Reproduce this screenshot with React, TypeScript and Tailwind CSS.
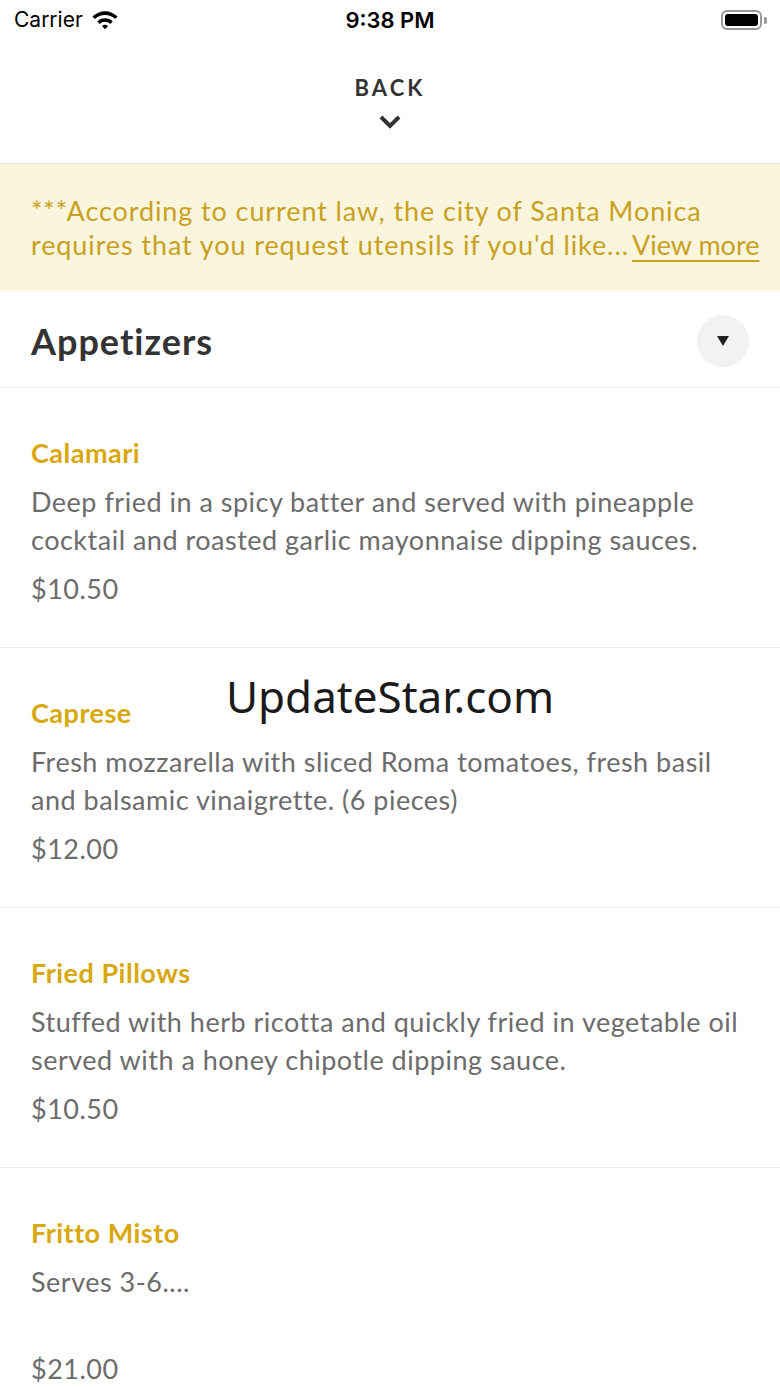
const items = [
  {
    name: 'Calamari',
    desc: 'Deep fried in a spicy batter and served with pineapple cocktail and roasted garlic mayonnaise dipping sauces.',
    price: '$10.50',
  },
  {
    name: 'Caprese',
    desc: 'Fresh mozzarella with sliced Roma tomatoes, fresh basil and balsamic vinaigrette. (6 pieces)',
    price: '$12.00',
  },
  {
    name: 'Fried Pillows',
    desc: 'Stuffed with herb ricotta and quickly fried in vegetable oil served with a honey chipotle dipping sauce.',
    price: '$10.50',
  },
  {
    name: 'Fritto Misto',
    desc: 'Serves 3-6....\n\u00a0',
    price: '$21.00',
  },
]

function StatusBar() {
  return (
    <div className="relative flex h-[40px] items-center justify-between pl-[14px] pr-[13px] font-['Inter',sans-serif] text-[21px] text-black">
      <div className="flex items-center gap-[8px]">
        <span>Carrier</span>
        <svg width="28" height="21" viewBox="0 0 26 20" className="mb-[2px]">
          <path d="M1 7.2a17 17 0 0 1 24 0l-2.4 2.4a13.6 13.6 0 0 0-19.2 0z" fill="#000" />
          <path d="M5.6 11.8a10.5 10.5 0 0 1 14.8 0l-2.4 2.4a7.1 7.1 0 0 0-10 0z" fill="#000" />
          <path d="M10.1 16.3a4.1 4.1 0 0 1 5.8 0L13 19.2z" fill="#000" />
        </svg>
      </div>
      <span className="absolute left-1/2 -translate-x-1/2 text-[22px] font-semibold">9:38 PM</span>
      <div className="flex items-center gap-[2px]">
        <div className="flex h-[20px] w-[41px] items-center rounded-[6px] border-2 border-[#9a9a9a] p-[2px]">
          <div className="h-full w-full rounded-[3px] bg-black" />
        </div>
        <div className="h-[7px] w-[3px] rounded-r-[2px] bg-[#9a9a9a]" />
      </div>
    </div>
  )
}

export default function App() {
  return (
    <div className="relative min-h-[1387px] w-[780px] overflow-hidden bg-white font-['Lato',sans-serif]">
      <StatusBar />

      <div className="flex h-[124px] flex-col items-center border-b border-[#e8e8e8] pt-[33px]">
        <span className="text-[22px] font-bold leading-[30px] tracking-[0.14em] text-[#333]">BACK</span>
        <svg width="24" height="16" viewBox="0 0 24 16" className="mt-[11px]">
          <path d="M3 3l9 9 9-9" fill="none" stroke="#333" strokeWidth="4" />
        </svg>
      </div>

      <div className="bg-[#faf6de] pl-[31px] pr-[10px] pt-[30px] pb-[29px] text-[27px] leading-[34px] tracking-[0.9px] text-[#c9a020]">
        ***According to current law, the city of Santa Monica requires that you request utensils if you'd like...
        <span className="ml-[3px] whitespace-nowrap tracking-[0px] underline underline-offset-[5px] decoration-[2px]">View more</span>
      </div>

      <div className="flex h-[97px] items-center justify-between border-b border-[#ececec] pt-[4px] pl-[31px] pr-[31px]">
        <h2 className="text-[36px] font-bold tracking-[1px] text-[#333]">Appetizers</h2>
        <button className="flex h-[52px] w-[52px] items-center justify-center rounded-full bg-[#f2f2f2]">
          <svg width="12" height="10" viewBox="0 0 12 10">
            <path d="M0 0h12L6 10z" fill="#222" />
          </svg>
        </button>
      </div>

      {items.map((it) => (
        <div
          key={it.name}
          className="flex h-[260px] flex-col border-b border-[#ececec] px-[31px] pt-[49px]"
        >
          <div className="text-[27px] font-bold leading-[32px] tracking-[0.5px] text-[#d9a70e]">{it.name}</div>
          <div className="mt-[14px] whitespace-pre-line text-[27px] leading-[38px] tracking-[0.5px] text-[#6c6c6c]">{it.desc}</div>
          <div className="mt-[11px] text-[27px] leading-[38px] tracking-[0.5px] text-[#6c6c6c]">{it.price}</div>
        </div>
      ))}

      <div className="pointer-events-none absolute top-[668px] left-0 w-full text-center font-['Noto_Sans',sans-serif] text-[44px] leading-[56px] text-[#1a1a1a]">
        UpdateStar.com
      </div>
    </div>
  )
}
